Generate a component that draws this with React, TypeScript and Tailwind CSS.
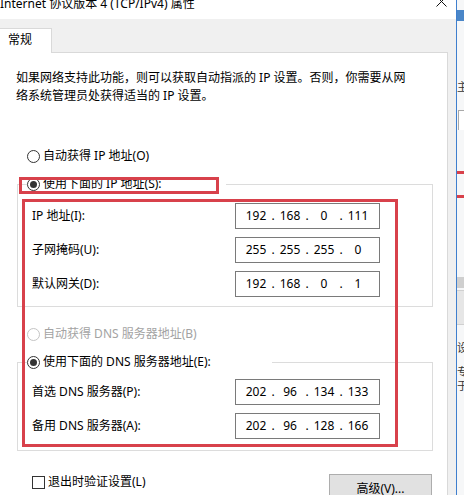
import React from 'react';

function Radio({ checked = false, disabled = false }: { checked?: boolean; disabled?: boolean }) {
  return (
    <span
      className={`flex h-[13px] w-[13px] shrink-0 items-center justify-center rounded-full border bg-white ${
        disabled ? 'border-[#c4c4c4]' : 'border-[#333333]'
      }`}
    >
      {checked && <span className="h-[7px] w-[7px] rounded-full bg-[#333333]" />}
    </span>
  );
}

function IpBox({ parts }: { parts: string[] }) {
  return (
    <div className="flex h-[26px] w-[145px] items-center border border-[#7a7a7a] bg-white pl-[5px] leading-[18px]">
      {parts.map((p, i) => (
        <React.Fragment key={i}>
          {i > 0 && <span className="w-[4px] text-center">.</span>}
          <span className="w-[30px] text-center">{p}</span>
        </React.Fragment>
      ))}
    </div>
  );
}

function FieldRow({ label, parts }: { label: string; parts: string[] }) {
  return (
    <div className="flex h-[26px] items-center pl-[5px]">
      <span className="w-[203px] leading-[18px]">{label}</span>
      <IpBox parts={parts} />
    </div>
  );
}

// sliver of the window that sits behind the dialog
function BackWindow() {
  return (
    <div className="flex h-[495px] w-[7px] flex-col overflow-hidden bg-[#f6f7f8] text-[11px] leading-none text-[#333]">
      <div className="h-[10px] shrink-0" />
      <div className="h-[11px] shrink-0 bg-[#4a86c8]" />
      <div className="h-[60px] shrink-0" />
      <div className="h-[12px] shrink-0 leading-[12px]">主</div>
      <div className="h-[17px] shrink-0" />
      <div className="ml-[1px] h-[20px] shrink-0 border-l border-t border-[#a8a8a8] bg-white" />
      <div className="h-[41px] shrink-0" />
      <div className="h-[3px] shrink-0 bg-[#d8414b]" />
      <div className="h-[21px] shrink-0" />
      <div className="h-[3px] shrink-0 bg-[#d8414b]" />
      <div className="h-[79px] shrink-0" />
      <div className="h-[11px] shrink-0 bg-[#cfcfcf]" />
      <div className="h-[2px] shrink-0" />
      <div className="h-[35px] shrink-0 border-y border-[#d0d0d0] bg-[#e6e6e6]" />
      <div className="h-[17px] shrink-0" />
      <div className="h-[12px] shrink-0 leading-[12px]">设</div>
      <div className="h-[12px] shrink-0" />
      <div className="h-[12px] shrink-0 leading-[12px]">专</div>
      <div className="h-[2px] shrink-0" />
      <div className="h-[12px] shrink-0 leading-[12px]">于</div>
    </div>
  );
}

export default function App() {
  return (
    <div className="flex h-[495px] w-[464px] overflow-hidden bg-white font-['Noto_Sans','Noto_Sans_CJK_SC',sans-serif] text-[12px] text-black">
      {/* Dialog */}
      <div className="flex w-[457px] shrink-0 flex-col border-r border-[#3f7fce] bg-[#f0f0f0]">
        {/* Title bar */}
        <div className="flex h-[19px] shrink-0 items-start justify-between bg-white pr-[9px]">
          <span className="-mt-[5px] whitespace-nowrap leading-[18px]">Internet 协议版本 4 (TCP/IPv4) 属性</span>
          <svg width="11" height="11" viewBox="0 0 11 11" className="-mt-[4px]">
            <path d="M0.5 0.5 L10.5 10.5 M10.5 0.5 L0.5 10.5" stroke="#111" strokeWidth="1" fill="none" />
          </svg>
        </div>

        {/* Tabs */}
        <div className="flex shrink-0 pt-[9px]">
          <div className="relative z-10 -mb-px flex h-[25px] w-[52px] items-center border-r border-t border-[#d9d9d9] bg-white pb-[2px] pl-[8px] leading-[18px]">
            常规
          </div>
        </div>

        {/* Panel */}
        <div className="relative flex w-[448px] flex-1 flex-col border-r border-t border-[#d9d9d9] bg-white">
          <p className="pl-[16px] pt-[16px] leading-[18px]">
            如果网络支持此功能，则可以获取自动指派的 IP 设置。否则，你需要从网
            <br />
            络系统管理员处获得适当的 IP 设置。
          </p>

          <div className="ml-[27px] mt-[42px] flex h-[18px] items-center">
            <Radio />
            <span className="ml-[3px] leading-[18px]">自动获得 IP 地址(O)</span>
          </div>

          <fieldset className="ml-[17px] mt-[10px] w-[416px] border border-[#dcdcdc] pb-[9px] pl-[9px] pt-[10px]">
            <legend className="flex h-[18px] w-[199px] items-center">
              <Radio checked />
              <span className="ml-[3px] leading-[18px]">使用下面的 IP 地址(S):</span>
            </legend>
            <div className="flex flex-col gap-[8px]">
              <FieldRow label="IP 地址(I):" parts={['192', '168', '0', '111']} />
              <FieldRow label="子网掩码(U):" parts={['255', '255', '255', '0']} />
              <FieldRow label="默认网关(D):" parts={['192', '168', '0', '1']} />
            </div>
          </fieldset>

          <div className="ml-[27px] mt-[18px] flex h-[18px] items-center">
            <Radio disabled />
            <span className="ml-[3px] leading-[18px] text-[#a3a3a3]">自动获得 DNS 服务器地址(B)</span>
          </div>

          <fieldset className="ml-[17px] mt-[10px] w-[416px] border border-[#dcdcdc] pb-[11px] pl-[9px] pt-[8px]">
            <legend className="flex h-[18px] w-[245px] items-center">
              <Radio checked />
              <span className="ml-[3px] leading-[18px]">使用下面的 DNS 服务器地址(E):</span>
            </legend>
            <div className="flex flex-col gap-[8px]">
              <FieldRow label="首选 DNS 服务器(P):" parts={['202', '96', '134', '133']} />
              <FieldRow label="备用 DNS 服务器(A):" parts={['202', '96', '128', '166']} />
            </div>
          </fieldset>

          <div className="ml-[32px] mt-[23px] flex w-[400px] items-start">
            <div className="-mt-px flex h-[18px] items-center">
              <span className="h-[13px] w-[13px] border border-[#333333] bg-white" />
              <span className="ml-[3px] leading-[18px]">退出时验证设置(L)</span>
            </div>
            <button className="ml-auto flex h-[30px] w-[103px] items-center justify-center border border-[#adadad] bg-[#e1e1e1] leading-[18px]">
              高级(V)...
            </button>
          </div>

          {/* Annotation boxes */}
          <div className="absolute left-[19px] top-[124px] h-[17px] w-[200px] border-[3px] border-[#d8414b]" />
          <div className="absolute left-[22px] top-[146px] h-[248px] w-[376px] border-[3px] border-[#d8414b]" />
        </div>
      </div>

      <BackWindow />
    </div>
  );
}
